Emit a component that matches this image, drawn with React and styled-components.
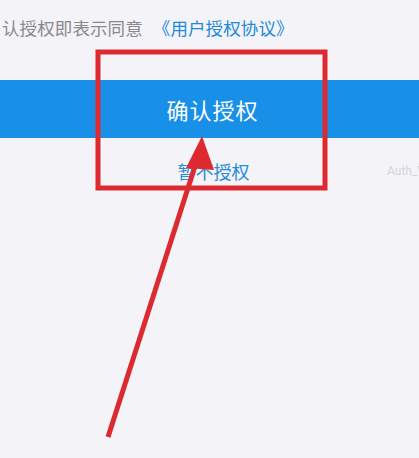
import React from "react";
import styled, { createGlobalStyle } from "styled-components";

const GlobalStyle = createGlobalStyle`
  html, body {
    margin: 0;
    padding: 0;
    background: #f3f3f8;
    overflow: hidden;
  }
  body {
    font-family: "Noto Sans CJK SC", "Noto Sans", sans-serif;
  }
`;

const Page = styled.div`
  position: relative;
  width: 419px;
  height: 458px;
  background: #f3f3f8;
  overflow: hidden;
`;

const Agreement = styled.p`
  margin: 0;
  padding: 16px 0 0 2px;
  height: 64px;
  box-sizing: border-box;
  font-size: 17.5px;
  line-height: 24px;
  color: #8a8a8e;
  white-space: nowrap;
  letter-spacing: 0.1px;
`;

const Link = styled.span`
  color: #1e8ad8;
  margin-left: 10px;
`;

const ConfirmBar = styled.div`
  height: 58px;
  margin-top: 16px;
  background: #1890e8;
  color: #fff;
  display: flex;
  align-items: center;
  justify-content: center;
  font-size: 22px;
  letter-spacing: 1px;
  padding-left: 6px;
`;

const Footer = styled.div`
  display: grid;
  grid-template-columns: 1fr auto 1fr;
  align-items: center;
  padding-top: 20px;
  height: 26px;
`;

const Skip = styled.span`
  grid-column: 2;
  color: #2a8bd6;
  font-size: 18px;
  padding-left: 8px;
`;

const Version = styled.span`
  justify-self: end;
  color: #d4d4da;
  font-family: "Roboto", "Liberation Sans", sans-serif;
  font-size: 12px;
  margin-right: -6px;
  white-space: nowrap;
`;

const Overlay = styled.svg`
  position: absolute;
  inset: 0;
  pointer-events: none;
`;

export default function App() {
  return (
    <Page>
      <GlobalStyle />
      <Agreement>
        认授权即表示同意<Link>《用户授权协议》</Link>
      </Agreement>
      <ConfirmBar>确认授权</ConfirmBar>
      <Footer>
        <Skip>暂不授权</Skip>
        <Version>Auth_V</Version>
      </Footer>
      <Overlay width="419" height="458" viewBox="0 0 419 458">
        <rect x="98" y="52" width="227" height="136" fill="none" stroke="#dc2a30" strokeWidth="5" />
        <line x1="108" y1="437" x2="197" y2="160" stroke="#dc2a30" strokeWidth="5" />
        <polygon points="202,136 186,168 214,170" fill="#dc2a30" />
      </Overlay>
    </Page>
  );
}
